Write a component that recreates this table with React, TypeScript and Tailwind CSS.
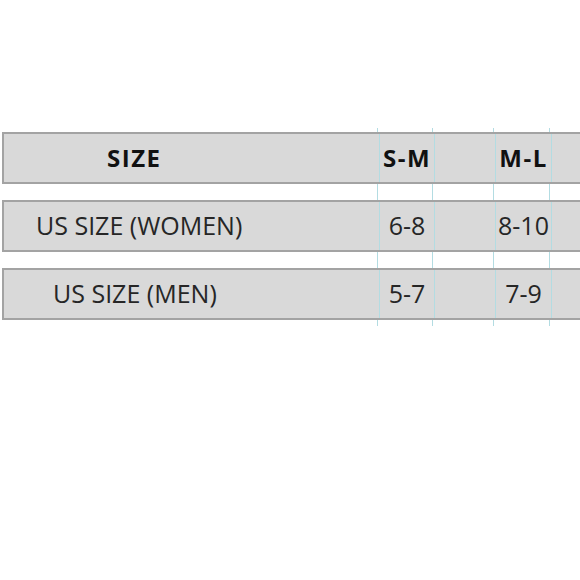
const FONT = "font-['Open_Sans','Liberation_Sans',sans-serif]"

type Row = {
  label: string
  pad: string
  sm: string
  ml: string
  header?: boolean
}

const ROWS: Row[] = [
  { label: 'SIZE', pad: 'pl-[103px]', sm: 'S-M', ml: 'M-L', header: true },
  { label: 'US SIZE (WOMEN)', pad: 'pl-[32px]', sm: '6-8', ml: '8-10' },
  { label: 'US SIZE (MEN)', pad: 'pl-[49px]', sm: '5-7', ml: '7-9' },
]

// the faint cyan guide lines run through every row, gaps included
function Cells({ row }: { row?: Row }) {
  const text = row?.header
    ? 'font-bold text-[24px] tracking-[1.5px] text-[#111]'
    : 'text-[25px] text-[#262626]'
  return (
    <>
      <div className={`w-[375px] shrink-0 flex items-center ${row?.pad ?? ''} ${text}`}>{row?.label}</div>
      <div className={`w-[55px] shrink-0 border-l border-[#b3dce2] flex items-center justify-center ${text}`}>{row?.sm}</div>
      <div className="w-[61px] shrink-0 border-l border-[#b3dce2]" />
      <div className={`w-[56px] shrink-0 border-l border-[#b3dce2] flex items-center justify-center ${text}`}>{row?.ml}</div>
      <div className="flex-1 border-l border-[#b3dce2]" />
    </>
  )
}

export default function App() {
  return (
    <main className={`w-[580px] h-[580px] bg-white overflow-hidden ${FONT}`}>
      <div className="pt-[128px] pl-[2px]">
        <div className="flex h-[4px]"><Cells /></div>
        {ROWS.map((r, i) => (
          <div key={r.label}>
            {i > 0 && <div className="flex h-[16px]"><Cells /></div>}
            <div className="flex h-[52px] bg-[#d9d9d9] border-y-2 border-l-2 border-[#a3a3a3]">
              <Cells row={r} />
            </div>
          </div>
        ))}
        <div className="flex h-[6px]"><Cells /></div>
      </div>
    </main>
  )
}
